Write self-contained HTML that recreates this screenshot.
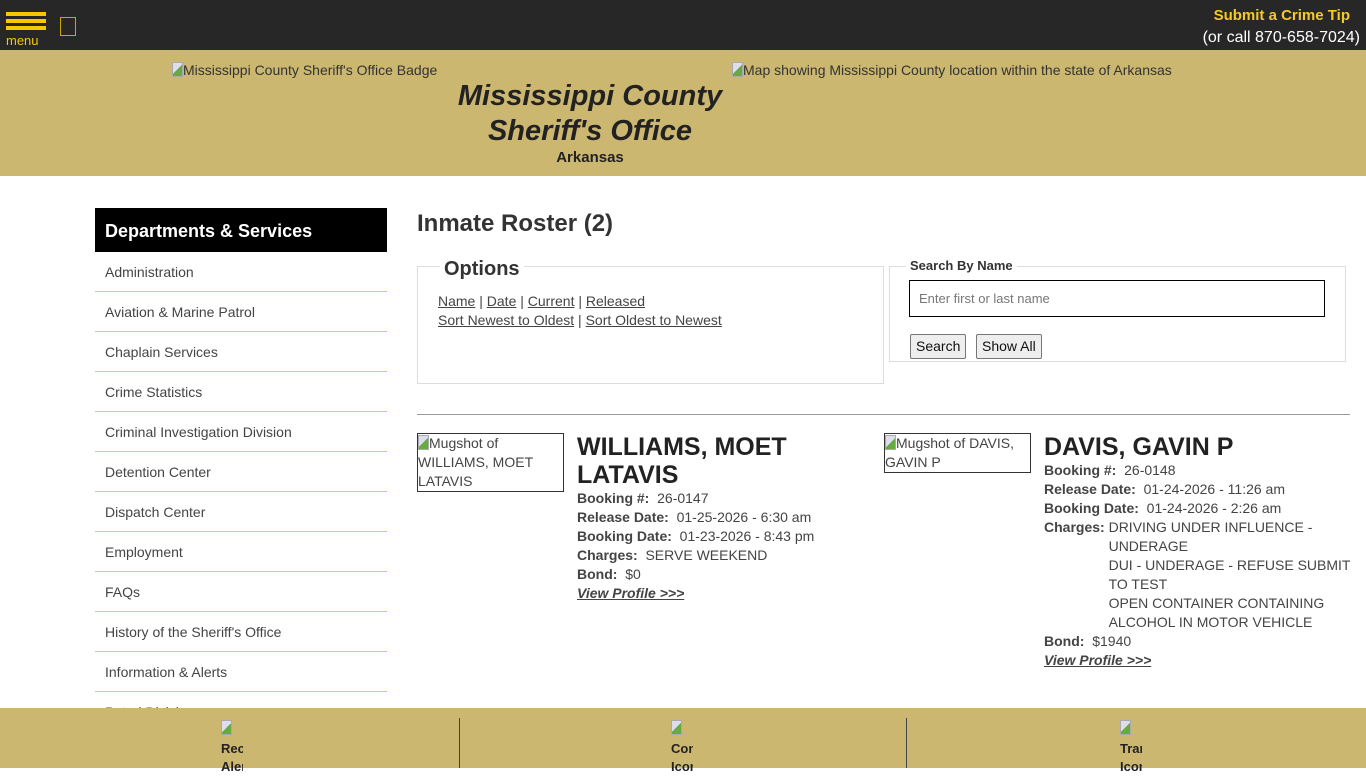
<!DOCTYPE html>
<html><head><meta charset="utf-8"><style>
*{margin:0;padding:0;box-sizing:border-box}
body{width:1366px;height:768px;overflow:hidden;background:#fff;font-family:"Liberation Sans",sans-serif;color:#333;position:relative}
.a{position:absolute;white-space:nowrap}
.top{position:absolute;left:0;top:0;width:1366px;height:50px;background:#272727}
.bar{position:absolute;left:6px;width:40px;height:4px;background:#f5c800}
.hdr{position:absolute;left:0;top:50px;width:1366px;height:126px;background:#cbb770}
.side{position:absolute;left:95px;top:208px;width:292px}
.side .h{background:#000;color:#fff;font-weight:bold;font-size:18px;height:44px;line-height:46px;padding-left:10px}
.side .i{height:40px;line-height:40px;border-bottom:1px solid #e8d520;font-size:14px;padding-left:10px;color:#444}
fieldset{position:absolute;border:1px solid #ddd}
a{color:#444}
.lbl{font-weight:bold}
.d{font-size:14px;line-height:19px;color:#444}
.btn{position:absolute;border:1px solid #777;background:#eee;border-radius:2px;font-size:14px;color:#111;height:25px;line-height:23px;padding:0 5px}
.foot{position:absolute;left:0;top:708px;width:1366px;height:60px;background:#cbb770}
.fi{position:absolute;top:12px;width:22px;overflow:hidden;font-size:13px;font-weight:bold;line-height:18px;color:#222}
.ph{width:11px;height:15px;border:1px solid #aaa;background:linear-gradient(135deg,#dde 50%,#6a4 50%);display:inline-block}
</style></head><body>
<div class="top">
<div class="bar" style="top:12px"></div><div class="bar" style="top:19px"></div><div class="bar" style="top:26px"></div>
<div class="a" style="left:6px;top:33px;font-size:13px;color:#f5c800">menu</div>
<div class="a" style="left:60px;top:17px;width:16px;height:19px;border:1px solid #c8a800"></div>
<div class="a" style="right:16px;top:7px;font-size:15px;font-weight:bold;color:#f5c82c">Submit a Crime Tip</div>
<div class="a" style="right:6px;top:29px;font-size:16px;color:#fff">(or call 870-658-7024)</div>
</div>
<div class="hdr">
<div class="a" style="left:172px;top:12px;font-size:14px;color:#333"><span class="ph" style="vertical-align:-2px"></span>Mississippi County Sheriff's Office Badge</div>
<div class="a" style="left:732px;top:12px;font-size:14px;color:#333"><span class="ph" style="vertical-align:-2px"></span>Map showing Mississippi County location within the state of Arkansas</div>
<div class="a" style="left:440px;width:300px;top:29px;text-align:center;font-size:29px;font-weight:bold;font-style:italic;line-height:35px;color:#222">Mississippi County<br>Sheriff's Office</div>
<div class="a" style="left:440px;width:300px;top:99px;text-align:center;font-size:15px;font-weight:bold;color:#222">Arkansas</div>
</div>
<div class="side"><div class="h">Departments &amp; Services</div>
<div class="i">Administration</div><div class="i">Aviation &amp; Marine Patrol</div><div class="i">Chaplain Services</div><div class="i">Crime Statistics</div><div class="i">Criminal Investigation Division</div><div class="i">Detention Center</div><div class="i">Dispatch Center</div><div class="i">Employment</div><div class="i">FAQs</div><div class="i">History of the Sheriff's Office</div><div class="i">Information &amp; Alerts</div><div class="i">Patrol Division</div>
</div>
<div class="a" style="left:417px;top:210px;font-size:24px;font-weight:bold;color:#333">Inmate Roster (2)</div>
<fieldset style="left:417px;top:266px;width:467px;height:118px"></fieldset>
<div class="a" style="left:440px;top:258px;background:#fff;padding:0 4px;font-size:20px;font-weight:bold;color:#333">Options</div>
<div class="a d" style="left:438px;top:292px"><a href="#">Name</a> | <a href="#">Date</a> | <a href="#">Current</a> | <a href="#">Released</a><br><a href="#">Sort Newest to Oldest</a> | <a href="#">Sort Oldest to Newest</a></div>
<fieldset style="left:889px;top:266px;width:457px;height:96px"></fieldset>
<div class="a" style="left:906px;top:258px;background:#fff;padding:0 4px;font-size:13px;font-weight:bold;color:#333">Search By Name</div>
<div class="a" style="left:909px;top:280px;width:416px;height:37px;border:1px solid #000;font-size:13px;color:#777;line-height:35px;padding-left:9px">Enter first or last name</div>
<div class="btn" style="left:910px;top:334px">Search</div>
<div class="btn" style="left:976px;top:334px">Show All</div>
<div class="a" style="left:417px;top:414px;width:933px;height:1px;background:#999"></div>
<div class="a" style="left:417px;top:433px;width:147px;height:59px;border:1px solid #333;font-size:14px;line-height:19px;white-space:normal;color:#444;overflow:hidden"><span class="ph" style="vertical-align:-2px"></span>Mugshot of<br>WILLIAMS, MOET<br>LATAVIS</div>
<div class="a" style="left:577px;top:433px;font-size:25px;font-weight:bold;line-height:28px;color:#222">WILLIAMS, MOET<br>LATAVIS</div>
<div class="a d" style="left:577px;top:489px"><span class="lbl">Booking #:</span>&nbsp; 26-0147<br><span class="lbl">Release Date:</span>&nbsp; 01-25-2026 - 6:30 am<br><span class="lbl">Booking Date:</span>&nbsp; 01-23-2026 - 8:43 pm<br><span class="lbl">Charges:</span>&nbsp; SERVE WEEKEND<br><span class="lbl">Bond:</span>&nbsp; $0<br><a href="#" style="font-weight:bold;font-style:italic">View Profile &gt;&gt;&gt;</a></div>
<div class="a" style="left:884px;top:433px;width:147px;height:40px;border:1px solid #333;font-size:14px;line-height:19px;white-space:normal;color:#444;overflow:hidden"><span class="ph" style="vertical-align:-2px"></span>Mugshot of DAVIS,<br>GAVIN P</div>
<div class="a" style="left:1044px;top:433px;font-size:25px;font-weight:bold;line-height:28px;color:#222">DAVIS, GAVIN P</div>
<div class="a d" style="left:1044px;top:461px"><span class="lbl">Booking #:</span>&nbsp; 26-0148<br><span class="lbl">Release Date:</span>&nbsp; 01-24-2026 - 11:26 am<br><span class="lbl">Booking Date:</span>&nbsp; 01-24-2026 - 2:26 am<br><span class="lbl">Charges:</span>&nbsp;<span style="display:inline-block;vertical-align:top;white-space:nowrap;width:245px">DRIVING UNDER INFLUENCE -<br>UNDERAGE<br>DUI - UNDERAGE - REFUSE SUBMIT<br>TO TEST<br>OPEN CONTAINER CONTAINING<br>ALCOHOL IN MOTOR VEHICLE</span><br><span class="lbl">Bond:</span>&nbsp; $1940<br><a href="#" style="font-weight:bold;font-style:italic">View Profile &gt;&gt;&gt;</a></div>
<div class="foot">
<div class="a" style="left:459px;top:10px;width:1px;height:50px;background:#444"></div>
<div class="a" style="left:906px;top:10px;width:1px;height:50px;background:#444"></div>
<div class="fi" style="left:221px"><span class="ph"></span><br>Recent<br>Alerts</div>
<div class="fi" style="left:671px"><span class="ph"></span><br>Contact<br>Icon</div>
<div class="fi" style="left:1120px"><span class="ph"></span><br>Transport<br>Icon</div>
</div>
</body></html>
